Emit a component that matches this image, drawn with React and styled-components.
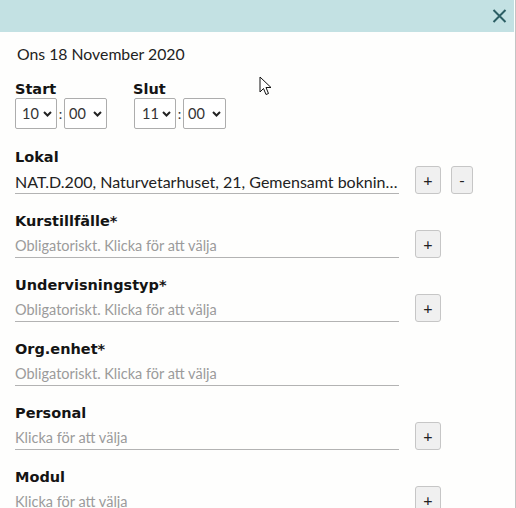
import React from "react";
import styled, { createGlobalStyle } from "styled-components";

const GlobalStyle = createGlobalStyle`
  html, body {
    margin: 0;
    padding: 0;
    background: #fefefd;
    overflow: hidden;
  }
  body {
    font-family: "Lato", "Liberation Sans", sans-serif;
  }
`;

const Page = styled.div`
  display: flex;
  width: 516px;
  height: 508px;
  overflow: hidden;
  position: relative;
`;

const Modal = styled.div`
  width: 514px;
  background: #fefefd;
  display: flex;
  flex-direction: column;
`;

const Edge = styled.div`
  width: 2px;
  background: linear-gradient(to right, #fefefd 0 1px, #c4c4c4 1px);
`;

const Header = styled.div`
  height: 32px;
  background: #c3e1e3;
  display: flex;
  align-items: center;
  justify-content: flex-end;
  padding-right: 7px;
  flex-shrink: 0;
`;

const CloseButton = styled.button`
  border: none;
  background: none;
  padding: 0;
  width: 16px;
  height: 16px;
  display: flex;
  align-items: center;
  justify-content: center;
  cursor: pointer;
`;

const Body = styled.div`
  padding: 12px 0 0 15px;
`;

const DateLine = styled.div`
  font-size: 15.8px;
  line-height: 20px;
  color: #222;
  padding-left: 2px;
`;

const TimeRow = styled.div`
  display: flex;
  gap: 26px;
  margin-top: 16px;
`;

const TimeGroup = styled.div`
  display: flex;
  flex-direction: column;
`;

const Label = styled.div`
  font-family: "DejaVu Sans", "Liberation Sans", sans-serif;
  font-weight: 700;
  font-size: 14.5px;
  line-height: 18px;
  color: #141414;
`;

const Selects = styled.div`
  display: flex;
  align-items: center;
  padding-left: ${(p) => p.$indent || 0}px;
`;

const Select = styled.div`
  box-sizing: border-box;
  width: ${(p) => p.$w}px;
  height: 31px;
  border: 1px solid #adadad;
  border-radius: 2px;
  background: #fff;
  display: flex;
  align-items: center;
  justify-content: space-between;
  padding: 0 4px 0 ${(p) => p.$pl}px;
  font-size: 14.5px;
  color: #333;
`;

const Colon = styled.span`
  width: 7px;
  text-align: center;
  font-size: 14px;
  color: #333;
`;

const Field = styled.div`
  margin-top: ${(p) => (p.$first ? 19 : 18)}px;
`;

const Row = styled.div`
  display: flex;
  align-items: flex-end;
  gap: 10px;
`;

const Input = styled.div`
  box-sizing: border-box;
  width: 384px;
  height: 28px;
  margin-right: 6px;
  padding-top: 6px;
  border-bottom: 1px solid #b3b3b3;
  font-size: ${(p) => (p.$empty ? 14.5 : 16)}px;
  line-height: 20px;
  color: ${(p) => (p.$empty ? "#9b9b9b" : "#222")};
  white-space: nowrap;
  overflow: hidden;
  text-overflow: ellipsis;
`;

const SmallButton = styled.button`
  box-sizing: border-box;
  width: ${(p) => p.$w || 26}px;
  height: 28px;
  border: 1px solid #c6c6c6;
  border-radius: 3px;
  background: #f0f0f0;
  color: #222;
  font-family: "Lato", "Liberation Sans", sans-serif;
  font-size: 16px;
  line-height: 1;
  padding: 0;
  display: flex;
  align-items: center;
  justify-content: center;
`;

const Pointer = styled.svg`
  position: absolute;
  left: 259px;
  top: 76px;
`;

const Chevron = () => (
  <svg width="9" height="6" viewBox="0 0 9 6">
    <path d="M1 1 L4.5 4.5 L8 1" fill="none" stroke="#222" strokeWidth="2" />
  </svg>
);

const TimeSelect = ({ value, w, pl }) => (
  <Select $w={w} $pl={pl}>
    <span>{value}</span>
    <Chevron />
  </Select>
);

const fields = [
  { label: "Lokal", value: "NAT.D.200, Naturvetarhuset, 21, Gemensamt bokningsbara lokaler", buttons: ["+", "-"] },
  { label: "Kurstillfälle*", placeholder: "Obligatoriskt. Klicka för att välja", buttons: ["+"] },
  { label: "Undervisningstyp*", placeholder: "Obligatoriskt. Klicka för att välja", buttons: ["+"] },
  { label: "Org.enhet*", placeholder: "Obligatoriskt. Klicka för att välja", buttons: [] },
  { label: "Personal", placeholder: "Klicka för att välja", buttons: ["+"] },
  { label: "Modul", placeholder: "Klicka för att välja", buttons: ["+"] },
];

const App = () => {
  return (
    <>
      <GlobalStyle />
      <Page>
        <Modal>
          <Header>
            <CloseButton aria-label="Stäng">
              <svg width="15" height="14" viewBox="0 0 15 14">
                <path d="M1.5 1 L13.5 13 M13.5 1 L1.5 13" stroke="#2c5e64" strokeWidth="2" />
              </svg>
            </CloseButton>
          </Header>
          <Body>
            <DateLine>Ons 18 November 2020</DateLine>
            <TimeRow>
              <TimeGroup>
                <Label>Start</Label>
                <Selects>
                  <TimeSelect value="10" w={42} pl={6} />
                  <Colon>:</Colon>
                  <TimeSelect value="00" w={43} pl={4} />
                </Selects>
              </TimeGroup>
              <TimeGroup>
                <Label>Slut</Label>
                <Selects $indent={1}>
                  <TimeSelect value="11" w={42} pl={7} />
                  <Colon>:</Colon>
                  <TimeSelect value="00" w={43} pl={4} />
                </Selects>
              </TimeGroup>
            </TimeRow>
            {fields.map((f, i) => (
              <Field key={f.label} $first={i === 0}>
                <Label>{f.label}</Label>
                <Row>
                  <Input $empty={!f.value}>{f.value || f.placeholder}</Input>
                  {f.buttons.map((b) => (
                    <SmallButton key={b} $w={b === "-" ? 22 : 26}>
                      {b}
                    </SmallButton>
                  ))}
                </Row>
              </Field>
            ))}
          </Body>
        </Modal>
        <Edge />
        <Pointer width="13" height="21" viewBox="0 0 13 21">
          <path
            d="M1 1 L1 16 L4.5 12.5 L7 18.5 L9.5 17.5 L7 11.5 L12 11.5 Z"
            fill="#fff"
            stroke="#111"
            strokeWidth="1"
            strokeLinejoin="round"
          />
        </Pointer>
      </Page>
    </>
  );
};

export default App;
